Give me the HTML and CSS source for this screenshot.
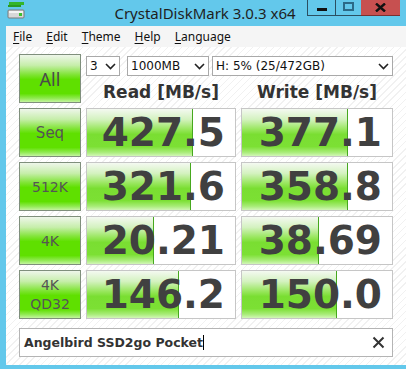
FILE: index.html
```html
<!DOCTYPE html>
<html lang="en">
<head>
    <meta charset="UTF-8">
    <title>CrystalDiskMark 3.0.3 x64</title>
    <link rel="stylesheet" href="styles.css">
</head>
<body>
    <div class="window">
        <div class="titlebar">
            <div class="app-icon">
                <svg width="18" height="18" viewBox="0 0 18 18">
                    <rect x="2" y="1" width="15" height="3" fill="#33b52a"/>
                    <rect x="1" y="4" width="13" height="2" fill="#2a9a22"/>
                    <rect x="1" y="9" width="16" height="8" rx="1" fill="#d8d8d8" stroke="#7a7a7a"/>
                    <rect x="2" y="10" width="14" height="2" fill="#f4f4f4"/>
                    <rect x="12" y="12" width="3" height="3" fill="#3cc030"/>
                </svg>
            </div>
            <div class="title">CrystalDiskMark 3.0.3 x64</div>
            <div class="caption-buttons">
                <div class="cap-btn minimize"><span class="min-bar"></span></div>
                <div class="cap-btn maximize"><span class="max-box"></span></div>
                <div class="cap-btn close">
                    <svg width="11" height="9" viewBox="0 0 11 9">
                        <path d="M1 0.5 L10 8.5 M10 0.5 L1 8.5" stroke="#111" stroke-width="2.4"/>
                    </svg>
                </div>
            </div>
        </div>

        <div class="frame">
            <div class="client">
                <div class="menubar">
                    <span class="menu-item"><u>F</u>ile</span>
                    <span class="menu-item"><u>E</u>dit</span>
                    <span class="menu-item"><u>T</u>heme</span>
                    <span class="menu-item"><u>H</u>elp</span>
                    <span class="menu-item"><u>L</u>anguage</span>
                </div>

                <div class="content">
                    <div class="bench">
                        <div class="label-btn all">All</div>
                        <div class="top-right">
                            <div class="combos">
                                <div class="combo combo-count">3<span class="chevron"><svg width="11" height="7" viewBox="0 0 11 7"><path d="M1 1 L5.5 5.5 L10 1" fill="none" stroke="#222" stroke-width="1.6"/></svg></span></div>
                                <div class="combo combo-size">1000MB<span class="chevron"><svg width="11" height="7" viewBox="0 0 11 7"><path d="M1 1 L5.5 5.5 L10 1" fill="none" stroke="#222" stroke-width="1.6"/></svg></span></div>
                                <div class="combo combo-drive">H: 5% (25/472GB)<span class="chevron"><svg width="11" height="7" viewBox="0 0 11 7"><path d="M1 1 L5.5 5.5 L10 1" fill="none" stroke="#222" stroke-width="1.6"/></svg></span></div>
                            </div>
                            <div class="headers">
                                <div class="col-head read-head">Read [MB/s]</div>
                                <div class="col-head write-head">Write [MB/s]</div>
                            </div>
                        </div>

                        <div class="label-btn">Seq</div>
                        <div class="result" style="--w: 106px">427.5</div>
                        <div class="result write" style="--w: 106px">377.1</div>

                        <div class="label-btn small">512K</div>
                        <div class="result" style="--w: 104px">321.6</div>
                        <div class="result write" style="--w: 106px">358.8</div>

                        <div class="label-btn small">4K</div>
                        <div class="result" style="--w: 67px">20.21</div>
                        <div class="result write" style="--w: 77px">38.69</div>

                        <div class="label-btn small two-line">4K<br>QD32</div>
                        <div class="result" style="--w: 92px">146.2</div>
                        <div class="result write" style="--w: 95px">150.0</div>
                    </div>

                    <div class="comment">
                        <span class="comment-text">Angelbird SSD2go Pocket<span class="caret"></span></span>
                        <svg class="clear" width="13" height="13" viewBox="0 0 13 13">
                            <path d="M1.5 1.5 L11.5 11.5 M11.5 1.5 L1.5 11.5" stroke="#333" stroke-width="2"/>
                        </svg>
                    </div>
                </div>
            </div>
        </div>
    </div>
</body>
</html>
```

FILE: styles.css
```css
body {
    margin: 0;
    background-color: #63c8eb;
    font-family: "DejaVu Sans", Verdana, sans-serif;
}

.window {
    width: 406px;
    height: 369px;
    display: flex;
    flex-direction: column;
    overflow: hidden;
}

/* title bar */
.titlebar {
    height: 26px;
    flex-shrink: 0;
    display: grid;
    grid-template-columns: 1fr auto 1fr;
    background-color: #63c8eb;
}

.app-icon {
    padding: 1px 0 0 7px;
}

.title {
    font-family: "Noto Sans", "Open Sans", sans-serif;
    font-size: 15px;
    color: #1e1e1e;
    line-height: 26px;
    padding-left: 4px;
}

.caption-buttons {
    display: flex;
    justify-content: flex-end;
    align-items: flex-start;
    padding-right: 6px;
}

.cap-btn {
    height: 16px;
    display: flex;
    align-items: center;
    justify-content: center;
    box-sizing: border-box;
}

.minimize {
    width: 29px;
    border: 1px solid #2b4f61;
    border-top: none;
}

.min-bar {
    width: 10px;
    height: 3px;
    margin-top: 3px;
    background-color: #111;
}

.maximize {
    width: 25px;
    border-bottom: 1px solid #2b4f61;
}

.max-box {
    width: 7px;
    height: 5px;
    border: 2px solid #2b6a88;
    margin-bottom: 2px;
}

.close {
    width: 39px;
    background-color: #c75050;
    border-bottom: 1px solid #7a3030;
}

/* window body */
.frame {
    flex-grow: 1;
    padding: 0 0 4px 6px;
    display: flex;
}

.client {
    flex-grow: 1;
    display: flex;
    flex-direction: column;
    background-color: #fff;
}

.menubar {
    height: 21px;
    display: flex;
    align-items: center;
    background-color: #f5f5f5;
    font-family: "Noto Sans", "Open Sans", sans-serif;
    font-size: 12px;
    color: #111;
    padding-left: 7px;
}

.menu-item {
    margin-right: 14px;
}

.menu-item u {
    text-underline-offset: 2px;
}

.content {
    flex-grow: 1;
    padding: 7px 0 0 13px;
    background-color: #fff;
    background-image: repeating-linear-gradient(135deg, #fff 0 4px, #f1f1f1 4px 5px);
}

.bench {
    display: grid;
    grid-template-columns: 62px 150px 152px;
    grid-auto-rows: 49px;
    gap: 5px;
}

.label-btn {
    box-sizing: border-box;
    border: 1px solid #7f8f7c;
    background: linear-gradient(to bottom, #eef6ea 0%, #c6eeaa 22%, #7fe434 42%, #5fe000 52%, #5fe000 82%, #8fea50 92%, #c4f4a0 100%);
    display: flex;
    align-items: center;
    justify-content: center;
    text-align: center;
    font-size: 15px;
    color: #555;
}

.label-btn.all {
    font-family: "Noto Sans", "Open Sans", sans-serif;
    font-size: 18px;
    color: #4a4a4a;
}

.label-btn.small {
    font-size: 14px;
}

.label-btn.two-line {
    line-height: 19px;
    padding-top: 1px;
}

.top-right {
    grid-column: 2 / 4;
    display: flex;
    flex-direction: column;
}

.combos {
    display: flex;
    margin-top: 2px;
    height: 20px;
}

.combo {
    box-sizing: border-box;
    height: 20px;
    border: 1px solid #a9a9a9;
    background-color: #fff;
    display: flex;
    align-items: center;
    justify-content: space-between;
    padding: 0 3px 0 3px;
    font-size: 12px;
    color: #111;
}

.chevron {
    display: flex;
}

.combo-count {
    width: 34px;
}

.combo-size {
    width: 82px;
    margin-left: 7px;
}

.combo-drive {
    width: 181px;
    margin-left: 3px;
}

.headers {
    display: flex;
    gap: 5px;
    margin-top: 6px;
}

.col-head {
    font-weight: bold;
    font-size: 17px;
    color: #333;
    text-align: center;
    line-height: 20px;
}

.read-head {
    width: 150px;
}

.write-head {
    width: 152px;
}

.result {
    box-sizing: border-box;
    border: 1px solid #c6c6c6;
    background-color: #fff;
    background-image:
        linear-gradient(#46a81e, #46a81e),
        linear-gradient(to bottom, #f4f9f1 0%, #d4f2c0 22%, #96e65a 44%, #7ade32 54%, #7ce034 80%, #a8ec78 92%, #d2f6b8 100%);
    background-size: 1px 100%, var(--w) 100%;
    background-position: calc(var(--w) - 1px) 0, 0 0;
    background-repeat: no-repeat;
    text-align: right;
    padding-right: 10px;
    font-weight: bold;
    font-size: 39px;
    line-height: 47px;
    color: #404040;
}

.comment {
    margin-top: 9px;
    width: 374px;
    height: 29px;
    box-sizing: border-box;
    border: 1px solid #b4b4b4;
    background-color: #fff;
    display: flex;
    align-items: center;
    justify-content: space-between;
    padding: 0 7px 0 4px;
}

.comment-text {
    font-weight: bold;
    font-size: 12.5px;
    color: #333;
    display: flex;
    align-items: center;
}

.caret {
    width: 1px;
    height: 15px;
    background-color: #000;
}
```
